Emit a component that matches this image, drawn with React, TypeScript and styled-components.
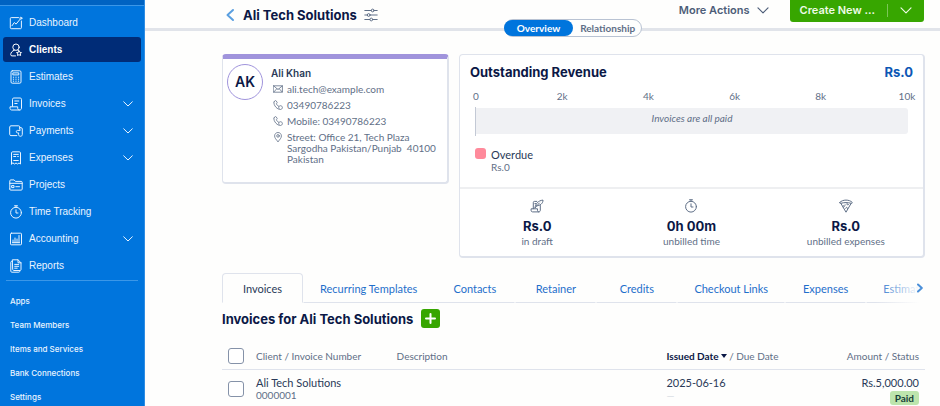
import React from "react";
import styled, { createGlobalStyle } from "styled-components";

const display = `Inter, "Liberation Sans", sans-serif`;
const grotesk = `"Liberation Sans", Arial, sans-serif`;
const body = `Lato, "Noto Sans", sans-serif`;

const color = {
  navy: "#0b1846",
  ink: "#2a3a58",
  slate: "#5f6f87",
  link: "#1f6fcb",
  blue: "#0075dd",
  green: "#37a600",
  line: "#dfe3ec",
};

const GlobalStyle = createGlobalStyle`
  *, *::before, *::after { box-sizing: border-box; }
  body { margin: 0; background: #fefefd; color: ${color.ink}; font: 10px/12px ${body}; }
  button { font: inherit; color: inherit; background: none; border: 0; padding: 0; cursor: pointer; }
  a { color: inherit; text-decoration: none; }
  h1, h2, h3, p, ul, dl, dd { margin: 0; padding: 0; }
  ul { list-style: none; }
  svg { display: block; flex: none; }
`;

const Page = styled.div`
  display: flex;
  height: 100vh;
  overflow: hidden;
`;

const Sidebar = styled.aside`
  flex: none;
  width: 145px;
  background: ${color.blue};
  border-right: 1px solid #2e8de4;
  color: #e9f4ff;
`;

const SidebarTop = styled.div`
  height: 6px;
  background: #0063c2;
  border-bottom: 1px solid #3b97e8;
`;

const NavList = styled.ul`
  padding: 4px 3px 0;
`;

const NavLink = styled.a<{ $active?: boolean }>`
  display: flex;
  align-items: center;
  gap: 6px;
  height: 25px;
  margin-bottom: 2px;
  padding: 0 8px 0 6px;
  border-radius: 3px;
  font-family: ${grotesk};
  font-size: 10px;
  font-weight: ${(p) => (p.$active ? 700 : 400)};
  color: ${(p) => (p.$active ? "#fff" : "inherit")};
  background: ${(p) => (p.$active ? "#002c77" : "transparent")};
`;

const NavLabel = styled.span`
  flex: 1;
`;

const SubNav = styled.ul`
  margin: 0 6px;
  padding: 8px 4px 0;
  border-top: 1px solid #3b97e8;
`;

const SubLink = styled.a`
  display: block;
  font-family: ${display};
  font-size: 8px;
  font-weight: 500;
  line-height: 24px;
`;

const Main = styled.main`
  flex: 1;
  min-width: 0;
`;

const Header = styled.header`
  position: relative;
  display: flex;
  align-items: center;
  height: 31px;
  padding: 2px 16px 0 80px;
  border-bottom: 3px solid #e1e4ea;
`;

const BackButton = styled.button`
  margin-right: 8px;
  color: #5a9fe0;
`;

const Title = styled.h1`
  margin-right: 7px;
  font: 700 13px/16px ${display};
  color: ${color.navy};
`;

const IconButton = styled.button`
  color: ${color.slate};
`;

const HeaderActions = styled.div`
  display: flex;
  align-self: flex-start;
  height: 22px;
  margin-top: -2px;
  margin-left: auto;
  font: 600 11px/20px ${display};
`;

const MoreButton = styled.button`
  display: flex;
  align-items: center;
  gap: 7px;
  margin-right: 21px;
  padding-bottom: 2px;
  color: #4d5d78;
`;

const CreateGroup = styled.div`
  display: flex;
  align-items: center;
  padding-bottom: 2px;
  border-radius: 0 0 3px 3px;
  background: ${color.green};
  color: #eefbe6;
`;

const CreateButton = styled.button`
  padding: 0 12px 0 10px;
`;

const CreateMenuButton = styled.button`
  padding: 3px 12px;
  border-left: 1px solid #7cc758;
`;

const Switcher = styled.div`
  position: absolute;
  top: 19px;
  left: 77px;
  right: 16px;
  display: flex;
  justify-content: center;
  pointer-events: none;
`;

const SwitcherTrack = styled.div`
  display: flex;
  border: 1px solid #b9c3d3;
  border-radius: 9px;
  background: #fefefd;
  pointer-events: auto;
`;

const SwitcherTab = styled.button<{ $active?: boolean }>`
  height: 16px;
  margin: ${(p) => (p.$active ? "0 0 0 -1px" : "0")};
  padding: ${(p) => (p.$active ? "0 13px" : "0 6px 0 7px")};
  border-radius: 8px;
  font: 700 10px/16px ${body};
  color: ${(p) => (p.$active ? "#fff" : color.slate)};
  background: ${(p) => (p.$active ? color.blue : "transparent")};
`;

const Content = styled.div`
  padding: 23px 15px 0 77px;
`;

const Cards = styled.div`
  display: flex;
  align-items: flex-start;
  gap: 10px;
`;

const Card = styled.section`
  border: 1px solid ${color.line};
  border-right-width: 2px;
  border-bottom-width: 2px;
  border-radius: 4px;
  background: #fff;
`;

const ContactCard = styled(Card)`
  display: flex;
  flex: none;
  gap: 8px;
  width: 227px;
  padding: 5px 8px 12px 4px;
  border-top: 5px solid #a094dc;
`;

const Avatar = styled.div`
  flex: none;
  width: 36px;
  height: 36px;
  border: 1px solid #a094dc;
  border-radius: 50%;
  font: 600 14px/34px ${display};
  text-align: center;
  color: ${color.navy};
`;

const ContactBody = styled.div`
  padding-top: 3px;
`;

const ContactName = styled.h2`
  margin-bottom: 5px;
  font: 600 10px/12px ${display};
  color: ${color.ink};
`;

const ContactLine = styled.div`
  display: flex;
  gap: 4px;
  margin: 0 0 5px 2px;
  line-height: 11px;
  color: ${color.slate};
`;

const Address = styled.address`
  font-style: normal;
  white-space: pre-line;
`;

const RevenueCard = styled(Card)`
  flex: 1;
  min-width: 0;
`;

const RevenueHead = styled.div`
  display: flex;
  justify-content: space-between;
  padding: 8px 10px 0;
  font: 700 13px/18px ${display};
  color: ${color.navy};
`;

const RevenueTitle = styled.h2`
  font: inherit;
`;

const RevenueTotal = styled.span`
  color: #0c57b5;
`;

const Chart = styled.div`
  padding: 9px 15px 0;
`;

const Axis = styled.div`
  display: flex;
  justify-content: space-between;
  color: ${color.slate};
`;

const Tick = styled.span`
  display: flex;
  justify-content: center;
  width: 2px;
`;

const Plot = styled.div`
  margin-top: 5px;
  padding: 1px 0 2px;
  border-left: 1px solid #c3c9d5;
`;

const EmptyBar = styled.div`
  height: 26px;
  border-radius: 0 3px 3px 0;
  background: #f0f1f4;
  font-style: italic;
  line-height: 21px;
  text-align: center;
  color: ${color.slate};
`;

const Legend = styled.div`
  display: flex;
  gap: 5px;
  padding: 12px 15px 14px;
`;

const Swatch = styled.span`
  width: 11px;
  height: 11px;
  border-radius: 3px;
  background: #ff8a9b;
`;

const LegendText = styled.p`
  color: ${color.slate};
`;

const LegendName = styled.span`
  display: block;
  font-size: 11px;
  line-height: 13px;
  color: ${color.ink};
`;

const Stats = styled.div`
  display: grid;
  grid-template-columns: repeat(3, 1fr);
  padding: 10px 0 9px;
  border-top: 2px solid #eeeff1;
`;

const Stat = styled.div`
  display: flex;
  flex-direction: column;
  align-items: center;
  color: ${color.slate};
`;

const StatValue = styled.strong`
  margin-top: 4px;
  font: 700 13px/18px ${display};
  color: ${color.navy};
`;

const Tabs = styled.nav`
  position: relative;
  display: flex;
  margin-top: 15px;
  overflow: hidden;
`;

const Tab = styled.a<{ $active?: boolean }>`
  flex: none;
  min-width: 81px;
  height: 30px;
  padding: 0 16px;
  border: 1px solid ${(p) => (p.$active ? color.line : "transparent")};
  border-bottom-color: ${(p) => (p.$active ? "transparent" : color.line)};
  border-radius: ${(p) => (p.$active ? "4px 4px 0 0" : "0")};
  font-size: 11px;
  line-height: 30px;
  text-align: center;
  color: ${(p) => (p.$active ? color.ink : color.link)};
`;

const TabsNext = styled.button`
  position: absolute;
  top: 0;
  right: 0;
  display: flex;
  align-items: center;
  justify-content: flex-end;
  width: 50px;
  height: 30px;
  padding-right: 2px;
  color: #4a8fd9;
  background: linear-gradient(to right, rgba(254, 254, 253, 0), #fefefd 90%);
`;

const ListHead = styled.div`
  display: flex;
  align-items: center;
  gap: 8px;
  padding: 6px 0;
`;

const ListTitle = styled.h2`
  font: 700 13px/18px ${display};
  color: ${color.navy};
`;

const AddButton = styled.button`
  display: grid;
  place-items: center;
  width: 19px;
  height: 19px;
  border-radius: 3px;
  background: ${color.green};
  color: #fff;
`;

const Table = styled.table`
  width: 100%;
  margin-top: 10px;
  border-collapse: collapse;
  table-layout: fixed;
`;

const HeadCell = styled.th<{ $width?: string; $right?: boolean }>`
  width: ${(p) => p.$width ?? "auto"};
  height: 25px;
  padding: ${(p) => (p.$right ? "0 6px 0 0" : "0")};
  border-bottom: 1px solid ${color.line};
  font-weight: 400;
  text-align: ${(p) => (p.$right ? "right" : "left")};
  color: ${color.slate};
  white-space: nowrap;
`;

const Cell = styled.td<{ $right?: boolean }>`
  padding: ${(p) => (p.$right ? "6px 6px 0 0" : "6px 0 0")};
  text-align: ${(p) => (p.$right ? "right" : "left")};
  vertical-align: top;
  white-space: nowrap;
`;

const CellMain = styled.div`
  font-size: 11px;
  line-height: 13px;
`;

const CellSub = styled.div`
  line-height: 13px;
  color: ${color.slate};
`;

const Faint = styled(CellSub)`
  color: #d5dae2;
`;

const SortButton = styled.button`
  display: inline-flex;
  align-items: center;
  gap: 2px;
  font-weight: 700;
  color: ${color.navy};
`;

const Check = styled.input`
  display: block;
  appearance: none;
  width: 16px;
  height: 16px;
  margin: 0 0 0 6px;
  border: 1px solid #8592a8;
  border-radius: 3px;
  background: #fff;
`;

const CheckCell = styled(Cell)`
  padding-top: 11px;
`;

const Badge = styled.span`
  display: inline-block;
  margin-top: 2px;
  padding: 0 5px;
  border-radius: 3px;
  background: #bde5ad;
  font-weight: 700;
  line-height: 14px;
  color: #17403a;
`;

type IconProps = { d: React.ReactNode; w?: number; h?: number; box?: string; sw?: number };
const Icon = ({ d, w = 14, h = 14, box = "0 0 14 14", sw = 1 }: IconProps) => (
  <svg width={w} height={h} viewBox={box} fill="none" stroke="currentColor" strokeWidth={sw} strokeLinecap="round" strokeLinejoin="round" aria-hidden="true">
    {d}
  </svg>
);

const Chevron = ({ w = 10, sw = 1 }: { w?: number; sw?: number }) => (
  <Icon w={w} h={w / 2 + 1} box="0 0 10 6" sw={sw} d={<path d="M.7.8 5 5 9.3.8" />} />
);

const stopwatch = (
  <>
    <circle cx="7" cy="7.7" r="5.4" />
    <path d="M5.5.8h3M7 .8v1.5M7 4.8V8h2" />
  </>
);

const phone = (
  <>
    <path d="M1 1.800 2.200.700c.3-.3.7-.2.9.1l1 1.500c.2.3.1.600-.1.800l-.7.700c.5 1.100 1.300 1.900 2.400 2.500" />
    <path d="M1 1.800C.300 3.200 1.600 5.800 3 7.300s3.400 2.300 4.400 2.200c1 0 2-.9 2-1.900 0-1.100-.9-1.900-1.900-1.900S5.700 6.500 5.700 7.500c0 .5.200.9.500 1.200" />
  </>
);

const nav: { label: string; icon: React.ReactNode; active?: boolean; menu?: boolean }[] = [
  {
    label: "Dashboard",
    icon: <><path d="M9.500 1.600H2.200a.9.900 0 0 0-.9.900v9.300c0 .5.400.9.900.9h9.300c.5 0 .9-.4.9-.9V5" /><path d="m3 9.700 2.300-3.200 1.800 1.600L11.300 3" /><circle cx="11.900" cy="2.200" r="1" /></>,
  },
  {
    label: "Clients",
    active: true,
    icon: <><circle cx="7" cy="4.200" r="3.200" /><path d="M5.400 7.200C3 7.900 1.800 9.600 1.700 11.600c0 .8.500 1.300 1.300 1.300h3.500M8.800 7.200l.6.300" /><path d="m10 7.800.8 1.500 1.700.3-1.200 1.200.3 1.700-1.600-.8-1.500.8.300-1.700-1.300-1.200 1.700-.3z" /></>,
  },
  {
    label: "Estimates",
    icon: <><rect x="2" y=".8" width="10" height="12.400" rx="1.300" /><path d="M4.200 2.900h5.600v2H4.200zM4.300 7.200h.4M6.800 7.200h.4M9.300 7.200h.4M4.300 9.200h.4M6.800 9.200h.4M9.300 9.200h.4M4.300 11.200h.4M6.800 11.200h.4M9.300 11.200h.4" /></>,
  },
  {
    label: "Invoices",
    menu: true,
    icon: <><path d="M3.500 9.300V2.300c0-.8.500-1.300 1.300-1.300h6.400c.8 0 1.300.5 1.300 1.300v8.800c0 1.100-.7 1.900-1.800 1.900H2.600C1.600 13 1 12.300 1 11.300v-1.500h7.700v1.500c0 1 .7 1.700 1.700 1.700M5.800 4h4M5.800 6.500h2.300" /></>,
  },
  {
    label: "Payments",
    menu: true,
    icon: <><path d="M10.800 3.700V3c0-.7-.5-1.200-1.200-1.200H2C1.200 1.800.7 2.400.7 3v7.400c0 .7.500 1.200 1.300 1.200h5.800M10.800 3.700H12c.8 0 1.300.5 1.300 1.200v5.500c0 1.200-.8 1.900-1.800 1.900S9.600 11.700 9.600 10.600V8.900H8.500c-1.600 0-1.600-2.500 0-2.500h2.300z" /></>,
  },
  {
    label: "Expenses",
    menu: true,
    icon: <><path d="M2.500 13V2c0-.7.500-1.200 1.200-1.200h6.600c.7 0 1.200.5 1.200 1.200v11l-1.500-1-1.500 1L7 12l-1.500 1L4 12zM4.700 3.400h4.600M4.700 5.500h2M8.700 5.500h.6M4.700 9.500h4.600" /></>,
  },
  {
    label: "Projects",
    icon: <><path d="M.8 11V3c0-.7.400-1.100 1-1.100h3.300l1.300 1.500h5.800c.6 0 1 .4 1 1v6.700c0 .6-.4 1-1 1H1.800c-.6 0-1-.4-1-1.100zM.8 5.300h12.400M3 7.600h2v2H3zM6.800 8.700h3.700" /></>,
  },
  { label: "Time Tracking", icon: stopwatch },
  {
    label: "Accounting",
    menu: true,
    icon: <><rect x="1.500" y="1.200" width="11" height="11.600" rx=".9" /><path d="M4 10.500V8M6 10.500V6M8 10.500V7M10 10.500v-7M3.500 10.700h7" /></>,
  },
  {
    label: "Reports",
    icon: <><path d="M3.600 2.300h-.8c-.6 0-1 .4-1 1v8.900c0 .6.400 1 1 1h7c.6 0 1-.4 1-1" /><path d="M3.700.8H9l3 3v6.700c0 .6-.4 1-1 1H4.700c-.6 0-1-.4-1-1zM9 .8v3h3M5.700 5.400h4M5.700 7.300h4M5.700 9.200h2.500" /></>,
  },
];

const subNav = ["Apps", "Team Members", "Items and Services", "Bank Connections", "Settings"];

const contact: { icon: React.ReactNode; text: string }[] = [
  { icon: <path d="M.6 1.800h8.800v6.400H.6zM.6 1.800 5 5.600l4.400-3.800M.8 8l3-3.300M9.200 8l-3-3.300" />, text: "ali.tech@example.com" },
  { icon: phone, text: "03490786223" },
  { icon: phone, text: "Mobile: 03490786223" },
  {
    icon: <><path d="M5 9.600C3 7.600 1.600 5.800 1.600 3.900 1.600 2 3.100.5 5 .5s3.400 1.500 3.400 3.400c0 1.900-1.400 3.700-3.400 5.700z" /><circle cx="5" cy="3.900" r="1.300" /></>,
    text: "Street: Office 21, Tech Plaza\nSargodha Pakistan/Punjab \u00a040100\nPakistan",
  },
];

const ticks = ["0", "2k", "4k", "6k", "8k", "10k"];

const stats: { value: string; label: string; icon: React.ReactNode }[] = [
  {
    value: "Rs.0",
    label: "in draft",
    icon: <><path d="M3.300 9.700V3.500c0-.7.400-1.100 1-1.100h2.500M10.300 6.500v4.700c0 1-.6 1.700-1.500 1.700H2.600c-.9 0-1.500-.6-1.500-1.600V9.800h6.400v1.500c0 .9.500 1.600 1.300 1.600M4.900 4.600h.8" /><path d="M5 8.800C5.400 5 8 1.600 13 1.100c.1 3.200-2.700 5.600-6.700 5.800M5 8.800l4.300-4.700" /></>,
  },
  { value: "0h 00m", label: "unbilled time", icon: stopwatch },
  {
    value: "Rs.0",
    label: "unbilled expenses",
    icon: <><path d="M.9 3.300C2.300 1.900 4.500 1.100 7 1.100s4.700.8 6.100 2.200c.4.500 0 1.300-.7 1.100C9 3.300 5 3.300 1.600 4.400c-.7.200-1.100-.6-.7-1.100z" /><path d="m2 4.600 5 8.600 5-8.600M4 8c1.300.6 2-.8.800-1.700M8 4.500c-.7 1.400 1 2.100 1.700.9M6.600 9.200c.6-1.500 2.200-1 1.800.6M6 6h.3" /></>,
  },
];

const tabs = ["Invoices", "Recurring Templates", "Contacts", "Retainer", "Credits", "Checkout Links", "Expenses", "Estimates"];

export default function App() {
  return (
    <>
      <GlobalStyle />
      <Page>
        <Sidebar>
          <SidebarTop />
          <nav aria-label="Main">
            <NavList>
              {nav.map((n) => (
                <li key={n.label}>
                  <NavLink href="#" $active={n.active}>
                    <Icon d={n.icon} />
                    <NavLabel>{n.label}</NavLabel>
                    {n.menu && <Chevron />}
                  </NavLink>
                </li>
              ))}
            </NavList>
            <SubNav>
              {subNav.map((s) => (
                <li key={s}>
                  <SubLink href="#">{s}</SubLink>
                </li>
              ))}
            </SubNav>
          </nav>
        </Sidebar>
        <Main>
          <Header>
            <BackButton aria-label="Back">
              <Icon w={10} h={14} box="0 0 10 14" sw={2} d={<path d="M8 2 2.500 7 8 12" />} />
            </BackButton>
            <Title>Ali Tech Solutions</Title>
            <IconButton aria-label="Client settings">
              <Icon d={<><path d="M.8 2.500h6.400M10.200 2.500h3M.8 7h2.400M6.200 7h7M.8 11.500h5M8.800 11.500h4.400" /><circle cx="8.700" cy="2.500" r="1.400" /><circle cx="4.700" cy="7" r="1.400" /><circle cx="7.300" cy="11.500" r="1.400" /></>} />
            </IconButton>
            <HeaderActions>
              <MoreButton>
                More Actions <Chevron w={12} sw={1} />
              </MoreButton>
              <CreateGroup>
                <CreateButton>Create New ...</CreateButton>
                <CreateMenuButton aria-label="Create options">
                  <Chevron w={12} sw={1} />
                </CreateMenuButton>
              </CreateGroup>
            </HeaderActions>
            <Switcher>
              <SwitcherTrack>
                <SwitcherTab $active>Overview</SwitcherTab>
                <SwitcherTab>Relationship</SwitcherTab>
              </SwitcherTrack>
            </Switcher>
          </Header>
          <Content>
            <Cards>
              <ContactCard>
                <Avatar>AK</Avatar>
                <ContactBody>
                  <ContactName>Ali Khan</ContactName>
                  {contact.map((c) => (
                    <ContactLine key={c.text}>
                      <Icon w={10} h={10} box="0 0 10 10" sw={0.8} d={c.icon} />
                      <Address>{c.text}</Address>
                    </ContactLine>
                  ))}
                </ContactBody>
              </ContactCard>
              <RevenueCard>
                <RevenueHead>
                  <RevenueTitle>Outstanding Revenue</RevenueTitle>
                  <RevenueTotal>Rs.0</RevenueTotal>
                </RevenueHead>
                <Chart>
                  <Axis>
                    {ticks.map((t) => (
                      <Tick key={t}>{t}</Tick>
                    ))}
                  </Axis>
                  <Plot>
                    <EmptyBar>Invoices are all paid</EmptyBar>
                  </Plot>
                </Chart>
                <Legend>
                  <Swatch />
                  <LegendText>
                    <LegendName>Overdue</LegendName>
                    Rs.0
                  </LegendText>
                </Legend>
                <Stats>
                  {stats.map((s) => (
                    <Stat key={s.label}>
                      <Icon d={s.icon} />
                      <StatValue>{s.value}</StatValue>
                      {s.label}
                    </Stat>
                  ))}
                </Stats>
              </RevenueCard>
            </Cards>
            <Tabs aria-label="Client records">
              {tabs.map((t, i) => (
                <Tab key={t} href="#" $active={i === 0}>
                  {t}
                </Tab>
              ))}
              <TabsNext aria-label="More tabs">
                <Icon w={6} h={10} box="0 0 6 10" sw={2} d={<path d="M1 1.500 4.800 5 1 8.500" />} />
              </TabsNext>
            </Tabs>
            <ListHead>
              <ListTitle>Invoices for Ali Tech Solutions</ListTitle>
              <AddButton aria-label="Add invoice">
                <Icon w={11} h={11} box="0 0 11 11" sw={2} d={<path d="M5.500 1v9M1 5.500h9" />} />
              </AddButton>
            </ListHead>
            <Table>
              <thead>
                <tr>
                  <HeadCell $width="34px">
                    <Check type="checkbox" aria-label="Select all invoices" />
                  </HeadCell>
                  <HeadCell $width="20%">Client / Invoice Number</HeadCell>
                  <HeadCell>Description</HeadCell>
                  <HeadCell $width="20%">
                    <SortButton>
                      Issued Date
                      <svg width="6" height="4" viewBox="0 0 6 4" fill="currentColor" aria-hidden="true">
                        <path d="M0 0h6L3 4z" />
                      </svg>
                    </SortButton>{" "}
                    / Due Date
                  </HeadCell>
                  <HeadCell $width="118px" $right>
                    Amount / Status
                  </HeadCell>
                </tr>
              </thead>
              <tbody>
                <tr>
                  <CheckCell>
                    <Check type="checkbox" aria-label="Select invoice 0000001" />
                  </CheckCell>
                  <Cell>
                    <CellMain>Ali Tech Solutions</CellMain>
                    <CellSub>0000001</CellSub>
                  </Cell>
                  <Cell />
                  <Cell>
                    <CellMain>2025-06-16</CellMain>
                    <Faint>—</Faint>
                  </Cell>
                  <Cell $right>
                    <CellMain>Rs.5,000.00</CellMain>
                    <Badge>Paid</Badge>
                  </Cell>
                </tr>
              </tbody>
            </Table>
          </Content>
        </Main>
      </Page>
    </>
  );
}
